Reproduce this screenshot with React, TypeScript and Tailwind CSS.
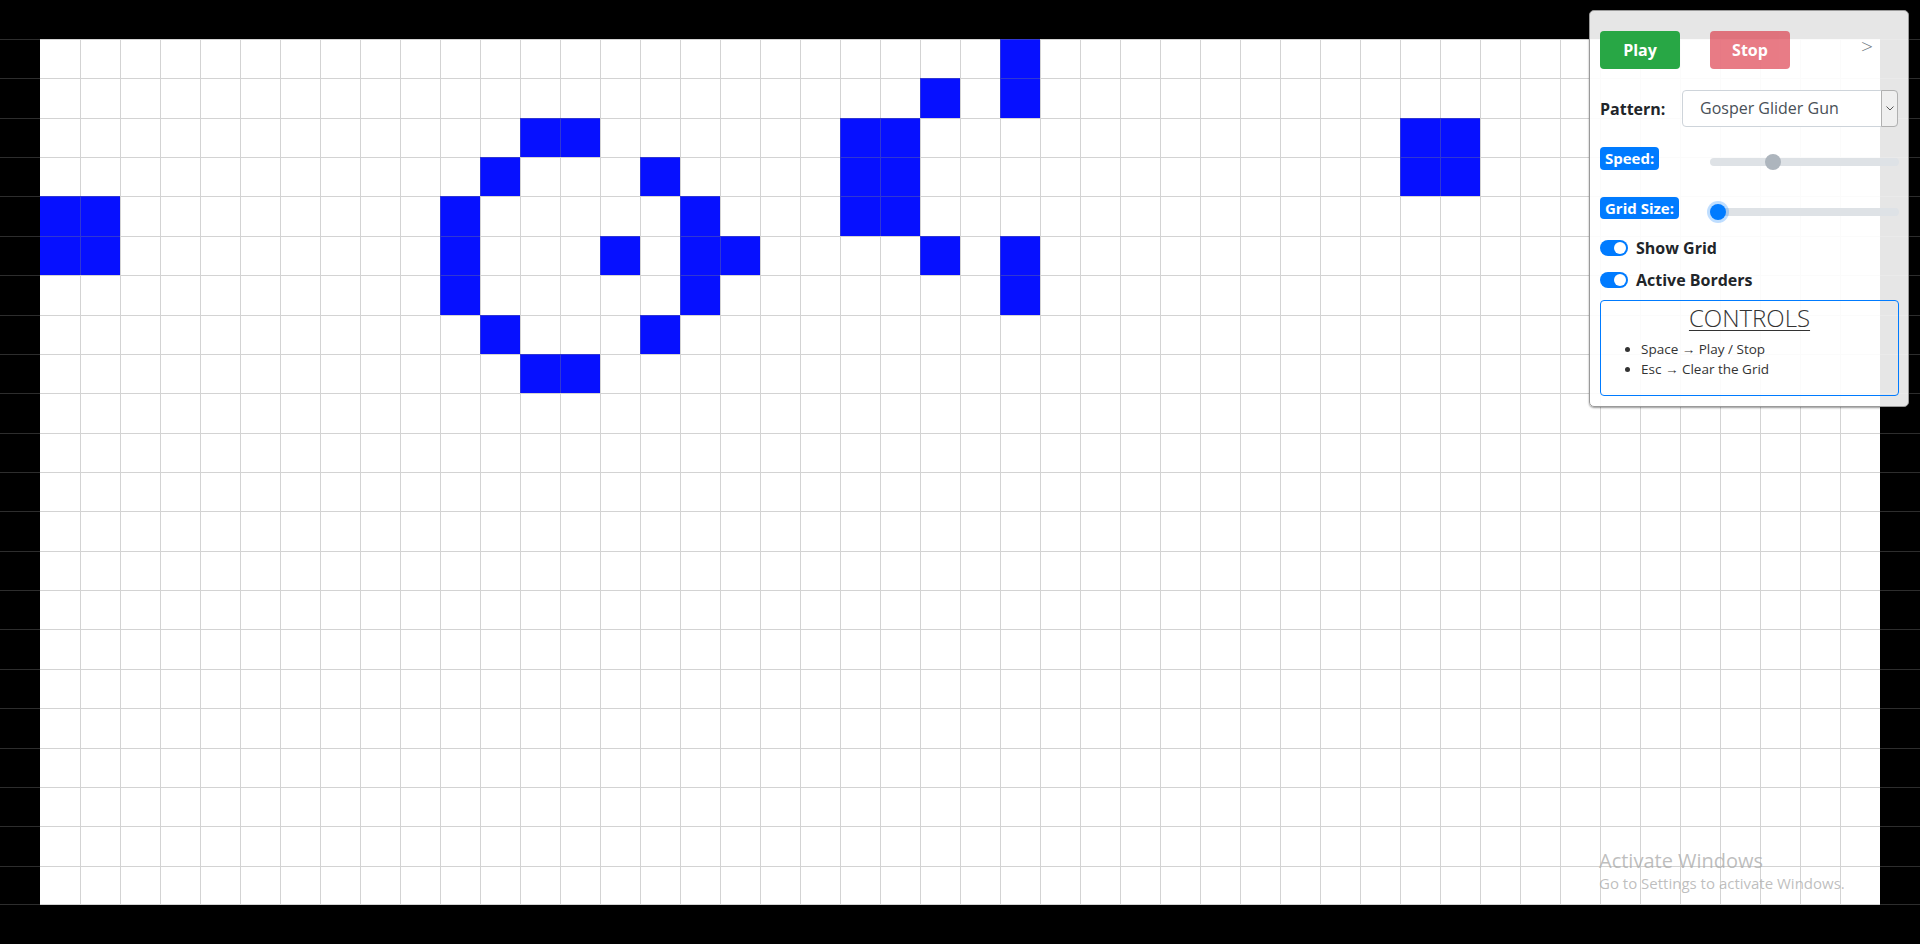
const COLS = 48
const ROWS = 22

// live cells as "row,col" (row 1 = first grid row under the black strip)
const LIVE = new Set([
    '5,1', '5,2', '6,1', '6,2',
    '3,13', '3,14', '4,12', '4,16', '5,11', '5,17',
    '6,11', '6,15', '6,17', '6,18', '7,11', '7,17',
    '8,12', '8,16', '9,13', '9,14',
    '1,25', '2,25', '2,23',
    '3,21', '3,22', '4,21', '4,22', '5,21', '5,22',
    '6,23', '6,25', '7,25',
    '3,35', '3,36', '4,35', '4,36',
])

const Grid = () => {
    const cells = []
    for (let r = 1; r <= ROWS; r++) {
        for (let c = 0; c < COLS; c++) {
            const edge = c === 0 || c === COLS - 1
            const alive = LIVE.has(`${r},${c}`)
            const bg = edge ? 'bg-black' : alive ? 'bg-[#0610ff]' : 'bg-white'
            const left = !edge && c > 1 ? 'border-l' : ''
            const bottom = r === ROWS ? 'border-b' : ''
            cells.push(
                <div
                    key={`${r}-${c}`}
                    className={`border-t border-[rgba(128,128,128,0.35)] ${left} ${bottom} ${bg}`}
                />
            )
        }
    }
    return (
        <div className="grid grid-cols-[repeat(48,40px)] grid-rows-[repeat(22,minmax(0,1fr))] h-[866px]">
            {cells}
        </div>
    )
}

const Switch = ({ label }: { label: string }) => (
    <div className="flex items-center h-[16px]">
        <div className="relative w-[28px] h-[16px] rounded-full bg-[#007bff]">
            <div className="absolute right-[2px] top-[2px] w-[12px] h-[12px] rounded-full bg-white" />
        </div>
        <span className="ml-[8px] font-bold text-[16px] leading-[16px] text-[#212529]">{label}</span>
    </div>
)

const Slider = ({ pos, active }: { pos: number; active?: boolean }) => (
    <div className="relative ml-auto w-[189px] h-[16px] mt-[7px]">
        <div className="absolute left-0 right-0 top-[4px] h-[8px] rounded-full bg-[#dee2e6]" />
        {active ? (
            <div
                className="absolute top-0 w-[16px] h-[16px] rounded-full bg-[#007bff] shadow-[0_0_0_3px_rgba(0,123,255,0.25)]"
                style={{ left: pos }}
            />
        ) : (
            <div className="absolute top-0 w-[16px] h-[16px] rounded-full bg-[#adb5bd]" style={{ left: pos }} />
        )}
    </div>
)

const Panel = () => (
    <div className="absolute left-[1589px] top-[10px] w-[320px] h-[397px] bg-white/90 border border-[#9a9a9a] rounded-[5px] shadow-[0_1px_2px_rgba(0,0,0,0.4)] pl-[10px] pr-[9px] pt-[20px] text-[#212529]">
        <div className="relative flex">
            <button className="w-[80px] h-[38px] rounded-[4px] bg-[#28a745] text-white font-bold text-[16px]">Play</button>
            <button className="ml-[30px] w-[80px] h-[38px] rounded-[4px] bg-[#dc3545] opacity-65 text-white font-bold text-[16px]">Stop</button>
            <span className="absolute right-[26px] top-[3px] text-[21px] leading-[24px] font-light text-[#6c757d]">&gt;</span>
        </div>

        <div className="flex items-center mt-[21px]">
            <span className="w-[82px] font-bold text-[16px]">Pattern:</span>
            <div className="flex w-[216px] h-[37px] border border-[#ced4da] rounded-[4px] bg-white">
                <span className="flex-1 pl-[17px] text-[16px] leading-[35px] text-[#495057]">Gosper Glider Gun</span>
                <div className="w-[17px] h-[37px] -mt-px -mr-px border border-[#b0b0b0] rounded-r-[4px] bg-[#efefef] flex items-center justify-center">
                    <svg width="8" height="5" viewBox="0 0 8 5">
                        <path d="M0.5 0.5 L4 4 L7.5 0.5" fill="none" stroke="#555" strokeWidth="1" />
                    </svg>
                </div>
            </div>
        </div>

        <div className="flex items-start mt-[20px]">
            <span className="px-[5px] h-[23px] leading-[23px] rounded-[4px] bg-[#007bff] text-white font-bold text-[15px]">Speed:</span>
            <Slider pos={55} />
        </div>

        <div className="flex items-start mt-[27px]">
            <span className="px-[5px] h-[22px] leading-[22px] rounded-[4px] bg-[#007bff] text-white font-bold text-[15px]">Grid Size:</span>
            <Slider pos={0} active />
        </div>

        <div className="mt-[20px]">
            <Switch label="Show Grid" />
        </div>
        <div className="mt-[16px]">
            <Switch label="Active Borders" />
        </div>

        <div className="mt-[12px] h-[96px] border border-[#007bff] rounded-[4px] text-[#333]">
            <div className="text-center text-[24px] leading-[30px] mt-[2px] font-light underline underline-offset-[3px] decoration-1">CONTROLS</div>
            <ul className="list-disc pl-[40px] mt-[6px] text-[13.5px] leading-[20px]">
                <li>Space → Play / Stop</li>
                <li>Esc → Clear the Grid</li>
            </ul>
        </div>
    </div>
)

const App = () => {
    return (
        <div className="relative h-screen w-screen overflow-hidden bg-black pt-[39px] [font-family:'Open_Sans',sans-serif]">
            <Grid />
            <Panel />
            <div className="absolute left-[1599px] top-[849px] text-[#a9a9a9]/75 pointer-events-none">
                <div className="text-[20px] leading-[24px]">Activate Windows</div>
                <div className="text-[15px] leading-[20px]">Go to Settings to activate Windows.</div>
            </div>
        </div>
    )
}

export default App
